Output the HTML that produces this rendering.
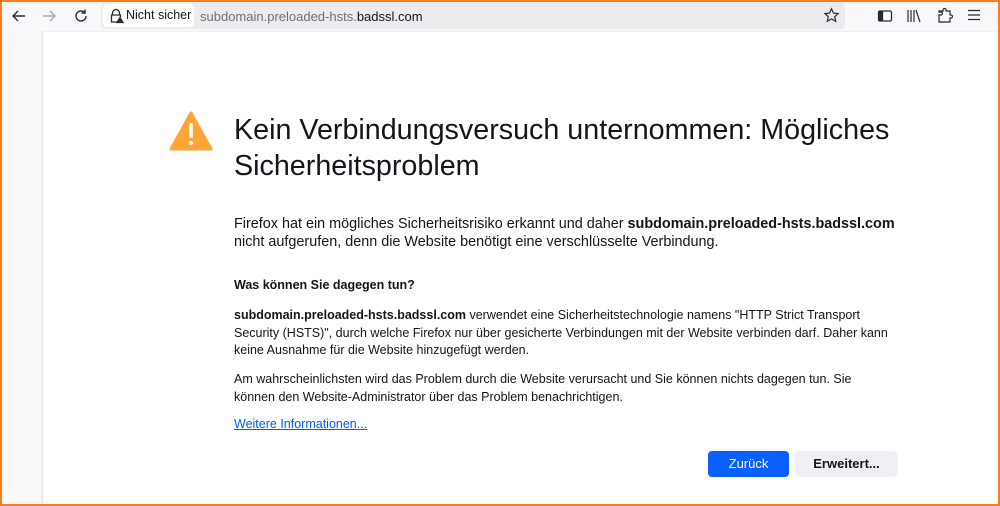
<!DOCTYPE html>
<html><head><meta charset="utf-8"><style>
*{margin:0;padding:0;box-sizing:border-box}
html,body{width:1000px;height:506px;overflow:hidden;background:#f9f9fb;font-family:"Liberation Sans",sans-serif;color:#15141a}
.frame{position:absolute;left:0;top:0;width:1000px;height:506px;border:2px solid #fb7d1b;z-index:5}
.url{position:absolute;left:101px;top:3px;width:744px;height:26px;background:#ececef;border-radius:4px}
.ns{position:absolute;left:103px;top:4px;width:91px;height:23px;background:#fff;border-radius:4px;font-size:12.5px;line-height:23px;padding-left:23px;white-space:nowrap}
.urltxt{position:absolute;left:200px;top:9px;font-size:13px;color:#6f6e74;white-space:nowrap}
.urltxt b{font-weight:normal;color:#15141a}
.content{position:absolute;left:43px;top:32px;width:955px;height:472px;background:#fff;box-shadow:-1px 0 2px rgba(0,0,0,.12)}
.abs{position:absolute;white-space:nowrap}
h1{position:absolute;left:234px;top:112px;font-size:28.7px;font-weight:normal;line-height:36px;white-space:nowrap}
.p1{left:234px;top:215px;font-size:14.4px;line-height:18px}
.h2{left:234px;top:278px;font-size:12.5px;font-weight:bold}
.p2{left:234px;top:307px;font-size:12.5px;line-height:17.5px}
.p3{left:234px;top:371px;font-size:12.5px;line-height:17.5px}
.link{left:234px;top:417px;font-size:12.5px;color:#0061e0;text-decoration:underline}
.btn{position:absolute;top:451px;height:26px;border-radius:4px;font-size:13px;line-height:26px;text-align:center}
svg{position:absolute}
</style></head><body>
<div class="frame"></div>
<svg style="left:10px;top:7px" width="18" height="18" viewBox="0 0 18 18" fill="none" stroke="#2b2a33" stroke-width="1.4"><path d="M15 9H3M8 4L3 9l5 5"/></svg>
<svg style="left:40px;top:7px" width="18" height="18" viewBox="0 0 18 18" fill="none" stroke="#a8a8ae" stroke-width="1.4"><path d="M3 9h12M10 4l5 5-5 5"/></svg>
<svg style="left:72px;top:7px" width="18" height="18" viewBox="0 0 18 18" fill="none" stroke="#2b2a33" stroke-width="1.4"><path d="M14 9a5 5 0 1 1-1.5-3.6"/><path d="M13 2.5v3.5H9.5"/></svg>
<div class="url"></div>
<div class="ns">Nicht sicher</div>
<svg style="left:108px;top:8px" width="16" height="16" viewBox="0 0 16 16" fill="none" stroke="#2b2a33" stroke-width="1.3"><path d="M4.5 7V5a3.5 3.5 0 0 1 7 0v2"/><path d="M9 14H3.5V7h9v2"/><path d="M12 9.5l3 5h-6z" fill="#2b2a33"/></svg>
<div class="urltxt">subdomain.preloaded-hsts.<b>badssl.com</b></div>
<svg style="left:823px;top:7px" width="17" height="17" viewBox="0 0 17 17" fill="none" stroke="#2b2a33" stroke-width="1.2"><path d="M8.5 1.8l2 4.3 4.6.5-3.4 3.1 1 4.6-4.2-2.4-4.2 2.4 1-4.6-3.4-3.1 4.6-.5z"/></svg>
<svg style="left:877px;top:9px" width="16" height="14" viewBox="0 0 16 14" fill="none" stroke="#2b2a33" stroke-width="1.3"><rect x="1.5" y="2" width="13" height="10" rx="1.5"/><rect x="2" y="2.5" width="3.5" height="9" fill="#2b2a33"/></svg>
<svg style="left:906px;top:8px" width="16" height="16" viewBox="0 0 16 16" fill="none" stroke="#2b2a33" stroke-width="1.2"><path d="M2 2v12M5 2v12M8 2v12M10 2l4 12"/></svg>
<svg style="left:937px;top:7px" width="16" height="17" viewBox="0 0 16 17" fill="none" stroke="#2b2a33" stroke-width="1.2"><path d="M2 15V8h2a1.5 1.5 0 1 0 0-3H2V4h4V3a1.5 1.5 0 0 1 3 0v1h4v4h1a1.5 1.5 0 0 1 0 3h-1v4z"/></svg>
<svg style="left:967px;top:9px" width="14" height="12" viewBox="0 0 14 12" fill="none" stroke="#2b2a33" stroke-width="1.3"><path d="M1 1.5h12M1 6h12M1 10.5h12"/></svg>
<div class="content"></div>
<svg style="left:169px;top:111px" width="44" height="40" viewBox="0 0 44 40"><path d="M22 2L2 38h40z" fill="#ffa436" stroke="#ffa436" stroke-width="3" stroke-linejoin="round"/><rect x="20.2" y="12" width="3.6" height="15" rx="1.5" fill="#fff"/><circle cx="22" cy="32" r="2" fill="#fff"/></svg>
<h1>Kein Verbindungsversuch unternommen: Mögliches<br>Sicherheitsproblem</h1>
<div class="abs p1">Firefox hat ein mögliches Sicherheitsrisiko erkannt und daher <b>subdomain.preloaded-hsts.badssl.com</b><br>nicht aufgerufen, denn die Website benötigt eine verschlüsselte Verbindung.</div>
<div class="abs h2">Was können Sie dagegen tun?</div>
<div class="abs p2"><b>subdomain.preloaded-hsts.badssl.com</b> verwendet eine Sicherheitstechnologie namens "HTTP Strict Transport<br>Security (HSTS)", durch welche Firefox nur über gesicherte Verbindungen mit der Website verbinden darf. Daher kann<br>keine Ausnahme für die Website hinzugefügt werden.</div>
<div class="abs p3">Am wahrscheinlichsten wird das Problem durch die Website verursacht und Sie können nichts dagegen tun. Sie<br>können den Website-Administrator über das Problem benachrichtigen.</div>
<div class="abs link">Weitere Informationen...</div>
<div class="btn" style="left:708px;width:81px;background:#0a60ff;color:#fff">Zurück</div>
<div class="btn" style="left:795px;width:103px;background:#f0f0f4;font-weight:bold">Erweitert...</div>
</body></html>
